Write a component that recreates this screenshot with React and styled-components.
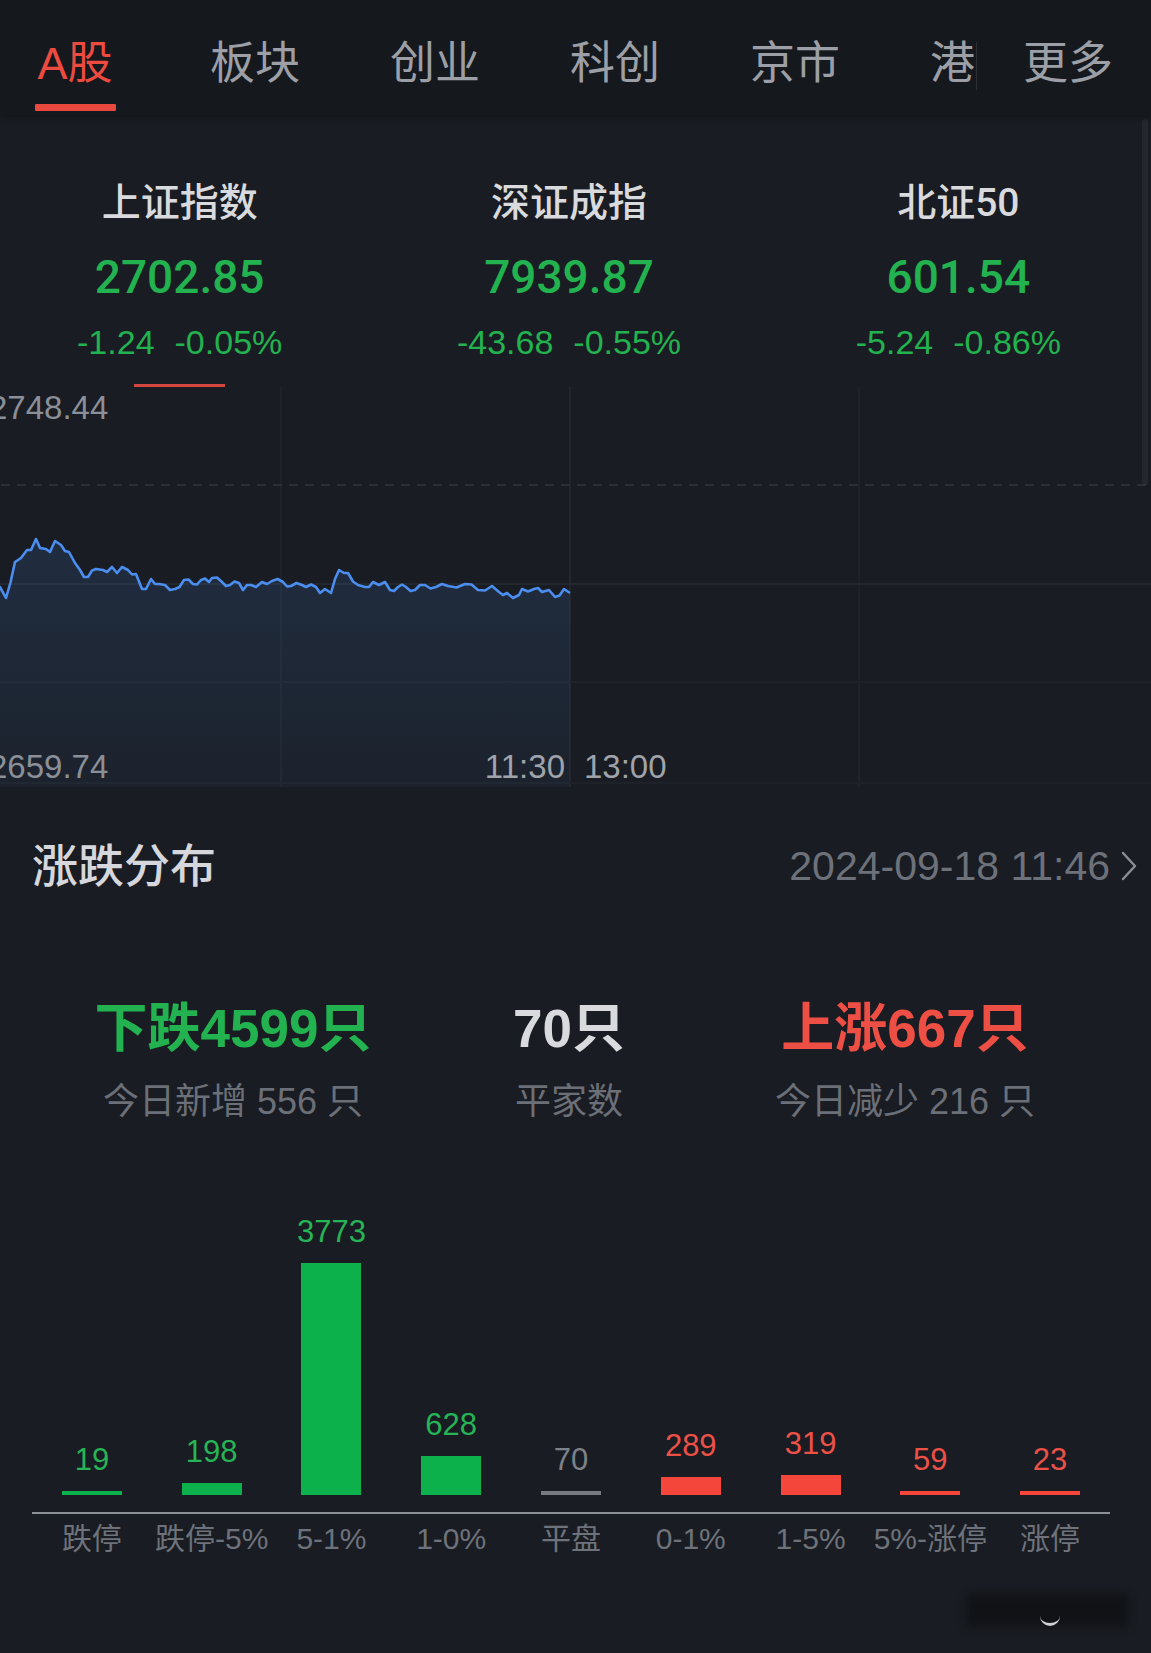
import React from 'react';
import styled, { createGlobalStyle } from 'styled-components';

const GlobalStyle = createGlobalStyle`
  *, *::before, *::after { box-sizing: border-box; }
  html, body { margin: 0; padding: 0; background: #191c22; }
  body { font-family: "Liberation Sans", "Noto Sans CJK SC", sans-serif; }
`;

const GREEN = '#22b24f';
const RED = '#ee4f45';

const Page = styled.div`
  position: relative;
  width: 1151px;
  height: 1653px;
  overflow: hidden;
  background: #191c22;
`;

const Header = styled.header`
  display: flex;
  height: 115px;
  background: #15181d;
  box-shadow: 0 2px 5px rgba(0, 0, 0, 0.25);
  position: relative;
  z-index: 1;
`;

const TabStrip = styled.nav`
  flex: none;
  display: flex;
  width: 976px;
  overflow: hidden;
`;

const Tab = styled.div`
  flex: none;
  width: 150px;
  margin-right: 30px;
  display: flex;
  flex-direction: column;
  align-items: center;
  color: ${(p) => (p.$active ? '#ee4b40' : '#9c9fa6')};
`;

const TabLabel = styled.span`
  display: block;
  padding-top: 41px;
  font-size: 45px;
  line-height: 46px;
  white-space: nowrap;
`;

const TabIndicator = styled.span`
  margin-top: auto;
  margin-bottom: 4px;
  width: 81px;
  height: 7px;
  border-radius: 1px;
  background: ${(p) => (p.$active ? '#e8483e' : 'transparent')};
`;

const Divider = styled.span`
  flex: none;
  width: 1px;
  height: 48px;
  margin-top: 42px;
  background: #2c2f36;
`;

const MoreTab = styled.div`
  flex: none;
  display: flex;
  flex-direction: column;
  padding-left: 46px;
  color: #9c9fa6;
`;

const IndexRow = styled.section`
  margin-left: -15px;
  width: 1168px;
  height: 272px;
  display: grid;
  grid-template-columns: repeat(3, 1fr);
`;

const IndexCard = styled.div`
  display: flex;
  flex-direction: column;
  align-items: center;
  padding-top: 68px;
`;

const IndexName = styled.div`
  font-family: "Roboto", "Noto Sans CJK SC", sans-serif;
  font-size: 39px;
  line-height: 40px;
  font-weight: 500;
  color: #d8dade;
`;

const IndexValue = styled.div`
  margin-top: 31px;
  font-family: "Roboto", "Liberation Sans", sans-serif;
  font-size: 46px;
  line-height: 46px;
  font-weight: 500;
  color: ${GREEN};
`;

const IndexChange = styled.div`
  margin-top: 25px;
  display: flex;
  gap: 20px;
  font-size: 34px;
  line-height: 34px;
  color: ${GREEN};
`;

const ActiveMarker = styled.div`
  margin-top: 25px;
  width: 91px;
  height: 3px;
  background: ${(p) => (p.$active ? '#d2463d' : 'transparent')};
`;

const ChartWrap = styled.div`
  position: relative;
  margin-left: -15px;
  width: 1168px;
  height: 400px;
`;

const ChartSvg = styled.svg`
  display: block;
`;

const AxisLabel = styled.span`
  position: absolute;
  top: ${(p) => p.$top}px;
  ${(p) => (p.$left !== undefined ? `left: ${p.$left}px;` : '')}
  ${(p) => (p.$right !== undefined ? `right: ${p.$right}px;` : '')}
  font-size: 33px;
  line-height: 33px;
  color: ${(p) => (p.$light ? '#a0a3aa' : '#8b8f97')};
  white-space: nowrap;
`;

const SectionHeader = styled.div`
  margin-top: 55px;
  height: 48px;
  padding: 0 13px 0 32px;
  display: flex;
  align-items: center;
  justify-content: space-between;
`;

const SectionTitle = styled.h2`
  margin: 0;
  font-size: 46px;
  line-height: 48px;
  font-weight: 500;
  color: #d5d7dc;
`;

const SectionMeta = styled.div`
  display: flex;
  align-items: center;
  gap: 10px;
  color: #6d717a;
`;

const DateText = styled.span`
  font-size: 41px;
  line-height: 48px;
`;

const CountsRow = styled.div`
  margin-top: 111px;
  margin-left: -15px;
  width: 1168px;
  display: grid;
  grid-template-columns: repeat(3, 336px);
  justify-content: center;
`;

const CountCell = styled.div`
  display: flex;
  flex-direction: column;
  align-items: center;
`;

const CountMain = styled.div`
  font-size: 53px;
  line-height: 56px;
  font-weight: 700;
  white-space: nowrap;
  color: ${(p) => p.$color};
`;

const CountSub = styled.div`
  margin-top: 25px;
  font-size: 36px;
  line-height: 40px;
  color: #6b6f77;
  white-space: nowrap;
`;

const BarArea = styled.div`
  margin-left: 32px;
  width: 1078px;
  height: 392px;
  padding-bottom: 17px;
  border-bottom: 2px solid #8b8f96;
  display: grid;
  grid-template-columns: repeat(9, 1fr);
  align-items: end;
`;

const BarColumn = styled.div`
  display: flex;
  flex-direction: column;
  align-items: center;
`;

const BarValue = styled.span`
  margin-bottom: 16px;
  font-size: 31px;
  line-height: 31px;
  color: ${(p) => p.$color};
`;

const Bar = styled.div`
  width: 60px;
  background: ${(p) => p.$color};
`;

const LabelRow = styled.div`
  margin-top: 8px;
  margin-left: 32px;
  width: 1078px;
  display: grid;
  grid-template-columns: repeat(9, 1fr);
`;

const BarLabel = styled.span`
  text-align: center;
  font-size: 30px;
  line-height: 34px;
  color: #6e727a;
  white-space: nowrap;
`;

const ScrollThumb = styled.div`
  position: absolute;
  right: 3px;
  top: 119px;
  width: 6px;
  height: 366px;
  border-radius: 3px;
  background: rgba(255, 255, 255, 0.05);
`;

const Watermark = styled.div`
  position: absolute;
  left: 967px;
  top: 1594px;
  width: 161px;
  height: 33px;
  border-radius: 4px;
  background: rgba(10, 11, 13, 0.55);
  filter: blur(4px);
`;

const WatermarkMark = styled.div`
  position: absolute;
  left: 1040px;
  top: 1613px;
  width: 20px;
  height: 13px;
  border-bottom: 3px solid rgba(255, 255, 255, 0.8);
  border-radius: 0 0 10px 10px;
  filter: blur(0.7px);
`;

const tabs = ['A股', '板块', '创业', '科创', '京市', '港股'];

const indices = [
  { name: '上证指数', value: '2702.85', chg: '-1.24', pct: '-0.05%', active: true },
  { name: '深证成指', value: '7939.87', chg: '-43.68', pct: '-0.55%' },
  { name: '北证50', value: '601.54', chg: '-5.24', pct: '-0.86%' },
];

const bars = [
  { label: '跌停', value: 19, tone: 'down' },
  { label: '跌停-5%', value: 198, tone: 'down' },
  { label: '5-1%', value: 3773, tone: 'down' },
  { label: '1-0%', value: 628, tone: 'down' },
  { label: '平盘', value: 70, tone: 'flat' },
  { label: '0-1%', value: 289, tone: 'up' },
  { label: '1-5%', value: 319, tone: 'up' },
  { label: '5%-涨停', value: 59, tone: 'up' },
  { label: '涨停', value: 23, tone: 'up' },
];

const toneBar = { down: '#0cb14b', up: '#f5463c', flat: '#767a82' };
const toneText = { down: '#26b456', up: '#ec5148', flat: '#7d8189' };

const pricePts = [
  [0, 196], [15, 200], [21, 211], [30, 175], [36, 171], [42, 163], [46, 163], [51, 152], [55, 161],
  [61, 162], [65, 165], [70, 154], [76, 158], [84, 165], [90, 176], [95, 183], [99, 190], [103, 190],
  [111, 182], [118, 183], [122, 185], [127, 180], [132, 186], [137, 180], [143, 183], [151, 187],
  [157, 202], [161, 202], [166, 192], [174, 197], [180, 198], [185, 203], [190, 202], [199, 193],
  [208, 197], [216, 193], [224, 195], [227, 191], [237, 195], [245, 198], [254, 196], [258, 203],
  [266, 198], [271, 200], [277, 195], [287, 194], [298, 195], [306, 199], [317, 198], [321, 200],
  [331, 200], [335, 206], [340, 202], [346, 206], [354, 183], [359, 186], [363, 186], [373, 198],
  [380, 200], [388, 195], [394, 198], [400, 195], [405, 203], [413, 200], [421, 200], [430, 203],
  [440, 198], [451, 200], [463, 199], [480, 197], [493, 203], [507, 199], [514, 205], [522, 206],
  [528, 211], [534, 208], [537, 202], [549, 202], [557, 205], [564, 203], [570, 210], [579, 202],
  [585, 206],
];

function buildPoints() {
  const out = [];
  for (let i = 0; i < pricePts.length; i++) {
    const [x, y] = pricePts[i];
    out.push([x, y]);
    const next = pricePts[i + 1];
    if (next && next[0] - x > 7) {
      const mx = (x + next[0]) / 2;
      const my = (y + next[1]) / 2 + (i % 2 === 0 ? 2.5 : -2.5);
      out.push([mx, my]);
    }
  }
  return out;
}

const pts = buildPoints();
const linePath = pts.map((p, i) => `${i ? 'L' : 'M'}${p[0].toFixed(1)},${p[1].toFixed(1)}`).join(' ');
const fillPath = `${linePath} L585,400 L0,400 Z`;

function IntradayChart() {
  return (
    <ChartWrap>
      <ChartSvg width="1168" height="400" viewBox="0 0 1168 400">
        <defs>
          <linearGradient id="areaFill" x1="0" y1="0" x2="0" y2="1">
            <stop offset="0%" stopColor="#3d72b8" stopOpacity="0.2" />
            <stop offset="100%" stopColor="#3d72b8" stopOpacity="0.07" />
          </linearGradient>
        </defs>
        <g stroke="#1f2329" strokeWidth="2">
          <line x1="296" y1="0" x2="296" y2="400" />
          <line x1="585" y1="0" x2="585" y2="400" stroke="#22262d" />
          <line x1="874" y1="0" x2="874" y2="400" />
          <line x1="0" y1="197" x2="1168" y2="197" stroke="#23272e" />
          <line x1="0" y1="295" x2="1168" y2="295" />
          <line x1="0" y1="396" x2="1168" y2="396" stroke="#1e2228" />
        </g>
        <line x1="0" y1="98" x2="1168" y2="98" stroke="#2a2e35" strokeWidth="2" strokeDasharray="9 7" />
        <path d={fillPath} fill="url(#areaFill)" />
        <path d={linePath} fill="none" stroke="#4b8ef0" strokeWidth="2.6" strokeLinejoin="round" />
      </ChartSvg>
      <AxisLabel $top={4} $left={4}>2748.44</AxisLabel>
      <AxisLabel $top={363} $left={4}>2659.74</AxisLabel>
      <AxisLabel $top={363} $right={588} $light>11:30</AxisLabel>
      <AxisLabel $top={363} $left={599} $light>13:00</AxisLabel>
    </ChartWrap>
  );
}

export default function App() {
  return (
    <Page>
      <GlobalStyle />
      <Header>
        <TabStrip>
          {tabs.map((t, i) => (
            <Tab key={t} $active={i === 0}>
              <TabLabel>{t}</TabLabel>
              <TabIndicator $active={i === 0} />
            </Tab>
          ))}
        </TabStrip>
        <Divider />
        <MoreTab>
          <TabLabel>更多</TabLabel>
        </MoreTab>
      </Header>

      <IndexRow>
        {indices.map((d) => (
          <IndexCard key={d.name}>
            <IndexName>{d.name}</IndexName>
            <IndexValue>{d.value}</IndexValue>
            <IndexChange>
              <span>{d.chg}</span>
              <span>{d.pct}</span>
            </IndexChange>
            <ActiveMarker $active={d.active} />
          </IndexCard>
        ))}
      </IndexRow>

      <IntradayChart />

      <SectionHeader>
        <SectionTitle>涨跌分布</SectionTitle>
        <SectionMeta>
          <DateText>2024-09-18 11:46</DateText>
          <svg width="18" height="32" viewBox="0 0 18 32">
            <polyline points="3,3 15,16 3,29" fill="none" stroke="#8a8e95" strokeWidth="2.4" strokeLinecap="round" strokeLinejoin="round" />
          </svg>
        </SectionMeta>
      </SectionHeader>

      <CountsRow>
        <CountCell>
          <CountMain $color={GREEN}>下跌4599只</CountMain>
          <CountSub>今日新增 556 只</CountSub>
        </CountCell>
        <CountCell>
          <CountMain $color="#d8dade">70只</CountMain>
          <CountSub>平家数</CountSub>
        </CountCell>
        <CountCell>
          <CountMain $color={RED}>上涨667只</CountMain>
          <CountSub>今日减少 216 只</CountSub>
        </CountCell>
      </CountsRow>

      <BarArea>
        {bars.map((b) => (
          <BarColumn key={b.label}>
            <BarValue $color={toneText[b.tone]}>{b.value}</BarValue>
            <Bar $color={toneBar[b.tone]} style={{ height: `${Math.max(4, Math.round((b.value * 232) / 3773))}px` }} />
          </BarColumn>
        ))}
      </BarArea>
      <LabelRow>
        {bars.map((b) => (
          <BarLabel key={b.label}>{b.label}</BarLabel>
        ))}
      </LabelRow>

      <ScrollThumb />
      <Watermark />
      <WatermarkMark />
    </Page>
  );
}
